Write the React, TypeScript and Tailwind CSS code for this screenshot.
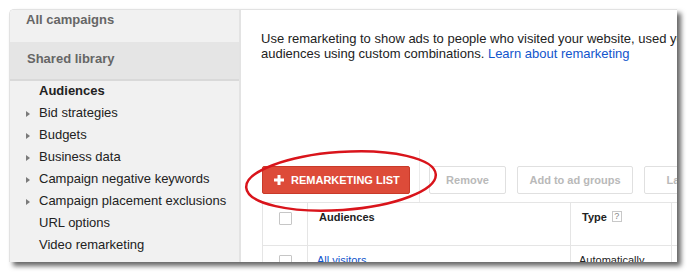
const sideItems = [
  { label: 'Bid strategies', arrow: true },
  { label: 'Budgets', arrow: true },
  { label: 'Business data', arrow: true },
  { label: 'Campaign negative keywords', arrow: true },
  { label: 'Campaign placement exclusions', arrow: true },
  { label: 'URL options', arrow: false },
  { label: 'Video remarketing', arrow: false },
];

function Checkbox() {
  return <div className="h-[13px] w-[13px] rounded-[1px] border border-[#c6c6c6] bg-white" />;
}

export default function App() {
  return (
    <div className="min-h-screen bg-white pl-[9px] pt-[9px]">
      <div
        className="relative flex h-[253px] w-[668px] overflow-hidden rounded-tl-[5px] border-l border-t border-[#e2e2e2] bg-white shadow-[4px_4px_5px_rgba(0,0,0,0.6)]"
        style={{ fontFamily: '"Liberation Sans", Arial, sans-serif' }}
      >
        {/* Sidebar */}
        <aside className="flex w-[231px] shrink-0 flex-col border-r-2 border-[#e3e3e3] bg-[#f1f1f1]">
          <div className="h-[32px] pl-[16px] pt-[2px] text-[13px] font-bold leading-[16px] text-[#666]">
            All campaigns
          </div>
          <div className="h-[39px] border-b-2 border-[#d9d9d9] bg-[#e5e5e5] pl-[17px] pt-[9px] text-[13px] font-bold leading-[16px] text-[#666]">
            Shared library
          </div>
          <ul className="-mt-[1px] text-[13px] leading-[22px] text-[#222]">
            <li className="pl-[29px] font-bold">Audiences</li>
            {sideItems.map((item) => (
              <li key={item.label} className="flex items-center">
                <span className="flex w-[29px] justify-start pl-[16px]">
                  {item.arrow && (
                    <span className="mt-[1px] h-0 w-0 border-y-[3.5px] border-l-[4px] border-y-transparent border-l-[#7a7a7a]" />
                  )}
                </span>
                {item.label}
              </li>
            ))}
          </ul>
        </aside>

        {/* Main */}
        <main className="min-w-0 flex-1 pl-[20px] pt-[21px]">
          <p className="whitespace-nowrap text-[13px] leading-[15px] text-[#222]">
            Use remarketing to show ads to people who visited your website, used your mobile app, or create
            <br />
            audiences using custom combinations. <span className="text-[#15c]">Learn about remarketing</span>
          </p>

          <div className="mt-[89px] flex h-[52px] w-[700px] items-start">
            <button className="ml-[1px] mt-[16px] flex h-[28px] w-[148px] items-center gap-[7px] rounded-[2px] border border-[#c93a29] bg-[#dd4b39] pl-[11px] text-[11px] font-bold text-white">
              <svg width="10" height="10" viewBox="0 0 10 10">
                <path d="M3.5 0h3v3.5H10v3H6.5V10h-3V6.5H0v-3h3.5z" fill="white" />
              </svg>
              REMARKETING LIST
            </button>
            <div className="mx-[9px] h-full w-px bg-[#ebebeb]" />
            <button className="mt-[16px] h-[28px] w-[77px] rounded-[2px] border border-[#e0e0e0] bg-white text-[11px] font-bold text-[#b9b9b9]">
              Remove
            </button>
            <button className="ml-[11px] mt-[16px] h-[28px] w-[116px] rounded-[2px] border border-[#e0e0e0] bg-white text-[11px] font-bold text-[#b9b9b9]">
              Add to ad groups
            </button>
            <button className="ml-[11px] mt-[16px] h-[28px] w-[80px] rounded-[2px] border border-[#e0e0e0] bg-white text-[11px] font-bold text-[#b9b9b9]">
              Labels
            </button>
          </div>

          {/* Table */}
          <div className="ml-[1px] w-[700px] border-l border-t border-[#e5e5e5] text-[11px] leading-[14px]">
            <div className="grid h-[43px] grid-cols-[45px_263px_101px_1fr] border-b border-[#e5e5e5]">
              <div className="flex justify-center border-r border-[#e5e5e5] pt-[9px]">
                <Checkbox />
              </div>
              <div className="border-r border-[#e5e5e5] pl-[11px] pt-[7px] font-bold text-[#222]">Audiences</div>
              <div className="flex items-start gap-[5px] border-r border-[#e5e5e5] pl-[11px] pt-[7px] font-bold text-[#222]">
                Type
                <span className="mt-[1px] flex h-[11px] w-[10px] items-center justify-center border border-[#c8c8c8] text-[9px] font-normal leading-none text-[#888]">
                  ?
                </span>
              </div>
              <div />
            </div>
            <div className="grid h-[40px] grid-cols-[45px_263px_101px_1fr]">
              <div className="flex justify-center border-r border-[#e5e5e5] pt-[9px]">
                <Checkbox />
              </div>
              <div className="border-r border-[#e5e5e5] pl-[9px] pt-[7px] text-[#15c]">All visitors</div>
              <div className="border-r border-[#e5e5e5] pl-[8px] pt-[7px] text-[#222]">Automatically</div>
              <div />
            </div>
          </div>
        </main>

        {/* Hand-drawn highlight */}
        <svg className="pointer-events-none absolute left-0 top-0" width="668" height="253">
          <ellipse
            cx="331"
            cy="171"
            rx="95"
            ry="29"
            transform="rotate(-4 331 171)"
            fill="none"
            stroke="#d9141b"
            strokeWidth="2.5"
          />
        </svg>
      </div>
    </div>
  );
}
